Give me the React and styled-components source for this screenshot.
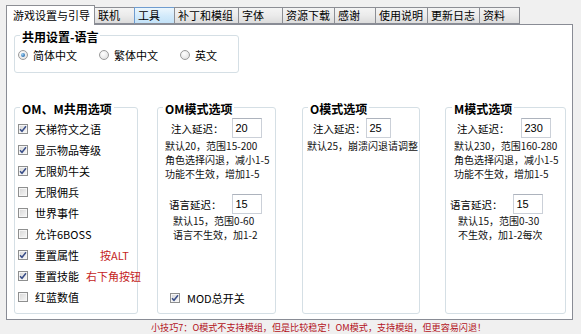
import styled, { createGlobalStyle } from 'styled-components'

const GlobalStyle = createGlobalStyle`
  html, body {
    margin: 0;
    padding: 0;
    background: #f0f0f0;
  }
  body {
    font-family: 'Noto Sans CJK SC', 'Noto Sans', sans-serif;
    color: #000;
  }
`

const Window = styled.div`
  width: 581px;
  height: 334px;
  display: flex;
  flex-direction: column;
  padding-top: 5px;
  box-sizing: border-box;
  background: #f0f0f0;
  overflow: hidden;
`

const TabStrip = styled.div`
  display: flex;
  align-items: flex-end;
  height: 19px;
  padding-left: 6px;
  position: relative;
  z-index: 1;
`

const Tab = styled.div`
  box-sizing: border-box;
  width: ${p => p.$w}px;
  height: ${p => (p.$active ? 20 : 17)}px;
  margin-bottom: ${p => (p.$active ? -1 : 0)}px;
  padding-left: ${p => (p.$active ? 6 : 3)}px;
  display: flex;
  align-items: center;
  font-size: 11px;
  line-height: 1;
  white-space: nowrap;
  border: 1px solid ${p => (p.$hover ? '#6f9ccf' : '#8c8e94')};
  border-bottom: ${p => (p.$active ? 'none' : '1px solid #898c95')};
  margin-left: -1px;
  background: ${p =>
    p.$active
      ? '#fff'
      : p.$hover
      ? 'linear-gradient(#ecf6fd, #d4ebfb 50%, #c3e2f8)'
      : 'linear-gradient(#f4f4f4, #ebebeb 50%, #dcdcdc)'};
  &:first-child {
    margin-left: 0;
  }
`

const Panel = styled.div`
  box-sizing: border-box;
  margin: 0 8px 0 6px;
  height: 296px;
  border: 1px solid #898c95;
  background: #fff;
  display: flex;
  flex-direction: column;
  padding: 0 0 0 7px;
`

const GroupBox = styled.fieldset`
  box-sizing: border-box;
  margin: ${p => p.$mt || 0}px 0 0 ${p => p.$ml || 0}px;
  width: ${p => p.$w}px;
  height: ${p => p.$h}px;
  padding: 0;
  min-inline-size: 0;
  border: 1px solid #d5dfe5;
  border-radius: 3px;
  display: flex;
  flex-direction: column;
`

const Legend = styled.legend`
  font-size: 12px;
  font-weight: bold;
  line-height: 14px;
  padding: 4px 2px 0 2px;
  margin-left: ${p => p.$ml || 5}px;
  background: #fff;
  white-space: nowrap;
`

const RadioRow = styled.div`
  display: flex;
  align-items: center;
  gap: 22px;
  padding: 4px 0 0 3px;
`

const RadioItem = styled.label`
  display: flex;
  align-items: center;
  gap: 5px;
  font-size: 11px;
  line-height: 14px;
`

const RadioDot = styled.span`
  box-sizing: border-box;
  width: 10px;
  height: 10px;
  border-radius: 50%;
  border: 1px solid #9a9a9a;
  background: radial-gradient(circle at 40% 35%, #fff, #e2e2e2 80%);
  display: flex;
  align-items: center;
  justify-content: center;
  &::after {
    content: '';
    width: 4px;
    height: 4px;
    border-radius: 50%;
    display: ${p => (p.$checked ? 'block' : 'none')};
    background: radial-gradient(circle at 35% 35%, #9fd3f5, #1f63a8 80%);
  }
`

const Row = styled.div`
  display: flex;
  margin-top: 25px;
`

const CheckList = styled.div`
  display: flex;
  flex-direction: column;
  padding: 2px 0 0 3px;
`

const CheckRow = styled.label`
  display: flex;
  align-items: center;
  height: 21px;
  gap: 7px;
  font-size: 11px;
  white-space: nowrap;
  margin-top: ${p => (p.$bottom ? 'auto' : '0')};
  padding-left: ${p => p.$indent || 0}px;
`

const Box = styled.span`
  box-sizing: border-box;
  width: 10px;
  height: 10px;
  flex: none;
  border: 1px solid #8e8f8f;
  box-shadow: inset 0 0 0 1px #f6f6f6;
  background: linear-gradient(135deg, #d6d6d6, #f8f8f8);
  display: flex;
  align-items: center;
  justify-content: center;
`

const Hint = styled.span`
  color: #c41e24;
  font-size: 11px;
  margin-left: ${p => p.$ml}px;
`

const DelayRow = styled.div`
  display: flex;
  align-items: center;
  height: 20px;
  margin-top: ${p => p.$mt || 0}px;
  padding-left: ${p => p.$indent}px;
  font-size: 10.5px;
  white-space: nowrap;
`

const Input = styled.div`
  box-sizing: border-box;
  width: ${p => p.$w}px;
  height: 20px;
  margin-left: ${p => p.$gap}px;
  border: 1px solid #cbd0d8;
  border-top-color: #adb3bd;
  padding-left: 3px;
  display: flex;
  align-items: center;
  font-family: 'Liberation Sans', sans-serif;
  font-size: 11px;
`

const Note = styled.div`
  font-size: 10px;
  line-height: 14px;
  color: #111;
  padding-left: ${p => p.$indent}px;
  margin-top: ${p => p.$mt || 0}px;
  white-space: nowrap;
`

const BottomSpace = styled.div`
  height: 5px;
  flex: none;
`

const Tip = styled.div`
  flex: 1;
  display: flex;
  align-items: center;
  padding-left: 151px;
  font-size: 9.1px;
  color: #b3121b;
  white-space: nowrap;
`

function Check({ checked, children, ...rest }) {
  return (
    <CheckRow {...rest}>
      <Box>
        {checked && (
          <svg width="8" height="8" viewBox="0 0 8 8">
            <path d="M1 4.2 L3 6.3 L7 1.2" fill="none" stroke="#3a4e88" strokeWidth="1.5" />
          </svg>
        )}
      </Box>
      {children}
    </CheckRow>
  )
}

function Radio({ checked, children }) {
  return (
    <RadioItem>
      <RadioDot $checked={checked} />
      {children}
    </RadioItem>
  )
}

const tabs = [
  ['游戏设置与引导', 89],
  ['联机', 41],
  ['工具', 41],
  ['补丁和模组', 65],
  ['字体', 45],
  ['资源下载', 53],
  ['感谢', 42],
  ['使用说明', 53],
  ['更新日志', 53],
  ['资料', 41],
]

export default function App() {
  return (
    <Window>
      <GlobalStyle />
      <TabStrip>
        {tabs.map(([name, w], i) => (
          <Tab key={name} $w={w} $active={i === 0} $hover={name === '工具'}>
            {name}
          </Tab>
        ))}
      </TabStrip>
      <Panel>
        <GroupBox $w={225} $h={47} $mt={1}>
          <Legend>共用设置-语言</Legend>
          <RadioRow>
            <Radio checked>简体中文</Radio>
            <Radio>繁体中文</Radio>
            <Radio>英文</Radio>
          </RadioRow>
        </GroupBox>

        <Row>
          <GroupBox $w={124} $h={216}>
            <Legend>OM、M共用选项</Legend>
            <CheckList>
              <Check checked>天梯符文之语</Check>
              <Check checked>显示物品等级</Check>
              <Check checked>无限奶牛关</Check>
              <Check>无限佣兵</Check>
              <Check>世界事件</Check>
              <Check>允许6BOSS</Check>
              <Check checked>
                重置属性<Hint $ml={14}>按ALT</Hint>
              </Check>
              <Check checked>
                重置技能<Hint $ml={0}>右下角按钮</Hint>
              </Check>
              <Check>红蓝数值</Check>
            </CheckList>
          </GroupBox>

          <GroupBox $w={119} $h={216} $ml={19}>
            <Legend>OM模式选项</Legend>
            <DelayRow $indent={13} $mt={2}>
              注入延迟：<Input $w={30} $gap={8}>20</Input>
            </DelayRow>
            <Note $indent={7} $mt={1}>
              默认20，范围15-200
              <br />
              角色选择闪退，减小1-5
              <br />
              功能不生效，增加1-5
            </Note>
            <DelayRow $indent={11} $mt={13}>
              语言延迟：<Input $w={30} $gap={10}>15</Input>
            </DelayRow>
            <Note $indent={15}>
              默认15，范围0-60
              <br />
              语言不生效，加1-2
            </Note>
            <Check checked $bottom $indent={12}>
              MOD总开关
            </Check>
            <BottomSpace />
          </GroupBox>

          <GroupBox $w={118} $h={216} $ml={26}>
            <Legend>O模式选项</Legend>
            <DelayRow $indent={10} $mt={2}>
              注入延迟：<Input $w={25} $gap={0}>25</Input>
            </DelayRow>
            <Note $indent={4} $mt={1}>
              默认25，崩溃闪退请调整
            </Note>
          </GroupBox>

          <GroupBox $w={121} $h={216} $ml={25}>
            <Legend $ml={6}>M模式选项</Legend>
            <DelayRow $indent={11} $mt={2}>
              注入延迟：<Input $w={30} $gap={11}>230</Input>
            </DelayRow>
            <Note $indent={8} $mt={1}>
              默认230，范围160-280
              <br />
              角色选择闪退，减小1-5
              <br />
              功能不生效，增加1-5
            </Note>
            <DelayRow $indent={4} $mt={13}>
              语言延迟：<Input $w={30} $gap={10}>15</Input>
            </DelayRow>
            <Note $indent={12}>
              默认15，范围0-30
              <br />
              不生效，加1-2每次
            </Note>
          </GroupBox>
        </Row>
      </Panel>
      <Tip>小技巧7：O模式不支持模组，但是比较稳定！OM模式，支持模组，但更容易闪退！</Tip>
    </Window>
  )
}
